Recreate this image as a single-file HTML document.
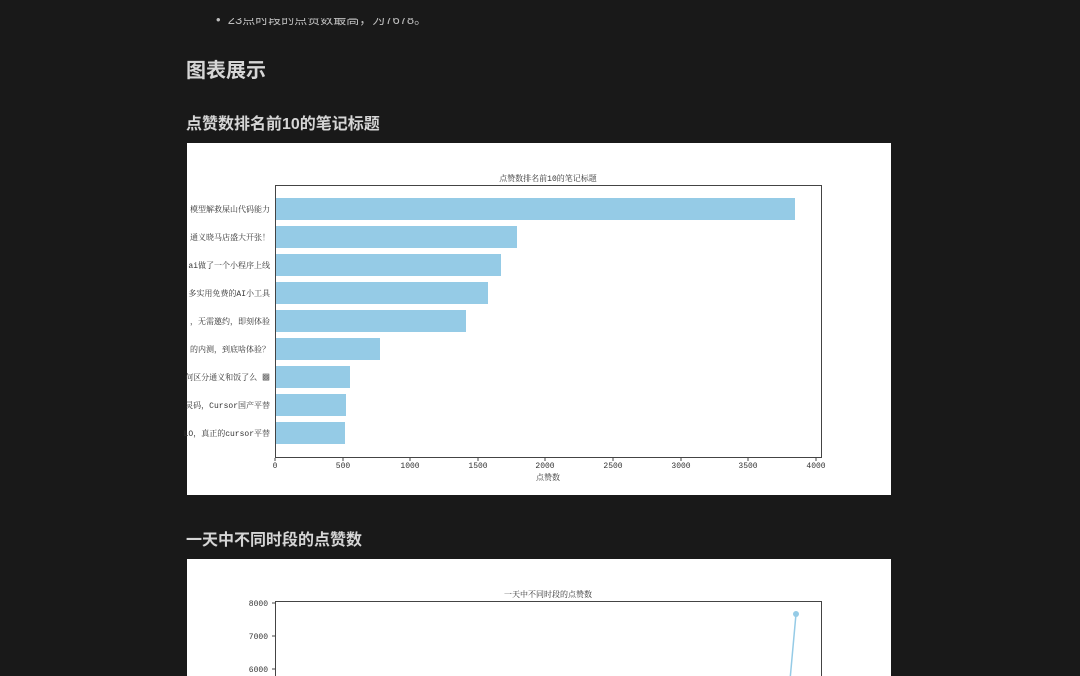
<!DOCTYPE html>
<html><head><meta charset="utf-8"><style>
html,body{margin:0;padding:0;background:#191919;width:1080px;height:676px;overflow:hidden;font-family:"Liberation Sans","Noto Sans CJK SC",sans-serif;color:#d4d4d4}
.t{position:absolute;white-space:nowrap}
</style></head><body>
<div class="t" style="left:216px;top:9px;font-size:13px;color:#bdbdbd">•&nbsp;&nbsp;23点时段的点赞数最高，为7678。</div>
<div style="position:absolute;left:0;top:0;width:1080px;height:18px;background:#191919"></div>
<div class="t" style="left:186px;top:54px;font-size:20px;font-weight:bold;color:#d6d6d6">图表展示</div>
<div class="t" style="left:186px;top:110px;font-size:16px;font-weight:bold;color:#d6d6d6">点赞数排名前10的笔记标题</div>
<div class="t" style="left:186px;top:526px;font-size:16px;font-weight:bold;color:#d6d6d6">一天中不同时段的点赞数</div>

<svg style="position:absolute;left:0;top:0" width="1080" height="676" font-family="'Liberation Mono','Noto Serif CJK SC',monospace">
<rect x="187" y="143" width="704" height="352" fill="#fff"/>
<rect x="187" y="559" width="704" height="130" fill="#fff"/>
<g fill="#95cbe6">
<rect x="275.5" y="198" width="519.5" height="22"/>
<rect x="275.5" y="226" width="241.5" height="22"/>
<rect x="275.5" y="254" width="225.5" height="22"/>
<rect x="275.5" y="282" width="212.5" height="22"/>
<rect x="275.5" y="310" width="190.5" height="22"/>
<rect x="275.5" y="338" width="104.5" height="22"/>
<rect x="275.5" y="366" width="74.5" height="22"/>
<rect x="275.5" y="394" width="70.5" height="22"/>
<rect x="275.5" y="422" width="69.5" height="22"/>
</g>
<rect x="275.5" y="185.5" width="546" height="272" fill="none" stroke="#444" stroke-width="1"/>
<g font-size="8" fill="#333" text-anchor="end">
<text x="270" y="212">模型解救屎山代码能力</text>
<text x="270" y="240">通义晓马店盛大开张！</text>
<text x="270" y="268">ai做了一个小程序上线</text>
<text x="270" y="296">多实用免费的AI小工具</text>
<text x="270" y="324">，无需邀约，即刻体验</text>
<text x="270" y="352">的内测，到底啥体验？</text>
<text x="270" y="380">何区分通义和饭了么 ▩</text>
<text x="270" y="408">灵码，Cursor国产平替</text>
<text x="270" y="436">LO，真正的cursor平替</text>
</g>
<g font-size="8" fill="#333" text-anchor="middle">
<text x="275" y="468">0</text><text x="343" y="468">500</text><text x="410" y="468">1000</text><text x="478" y="468">1500</text><text x="545" y="468">2000</text><text x="613" y="468">2500</text><text x="681" y="468">3000</text><text x="748" y="468">3500</text><text x="816" y="468">4000</text>
<text x="548" y="480">点赞数</text>
<text x="548" y="181">点赞数排名前10的笔记标题</text>
<text x="548" y="597">一天中不同时段的点赞数</text>
</g>
<g stroke="#444"><line x1="275" y1="458" x2="275" y2="461"/><line x1="343" y1="458" x2="343" y2="461"/><line x1="410" y1="458" x2="410" y2="461"/><line x1="478" y1="458" x2="478" y2="461"/><line x1="545" y1="458" x2="545" y2="461"/><line x1="613" y1="458" x2="613" y2="461"/><line x1="681" y1="458" x2="681" y2="461"/><line x1="748" y1="458" x2="748" y2="461"/><line x1="816" y1="458" x2="816" y2="461"/></g>
<rect x="275.5" y="601.5" width="546" height="100" fill="none" stroke="#444"/>
<g font-size="8" fill="#333" text-anchor="end">
<text x="268" y="606">8000</text><text x="268" y="639">7000</text><text x="268" y="672">6000</text>
</g>
<g stroke="#444"><line x1="272" y1="603" x2="275" y2="603"/><line x1="272" y1="636" x2="275" y2="636"/><line x1="272" y1="669" x2="275" y2="669"/></g>
<line x1="796" y1="614" x2="790" y2="680" stroke="#95cbe6" stroke-width="1.5"/>
<circle cx="796" cy="614" r="3" fill="#95cbe6"/>
</svg>
</body></html>
